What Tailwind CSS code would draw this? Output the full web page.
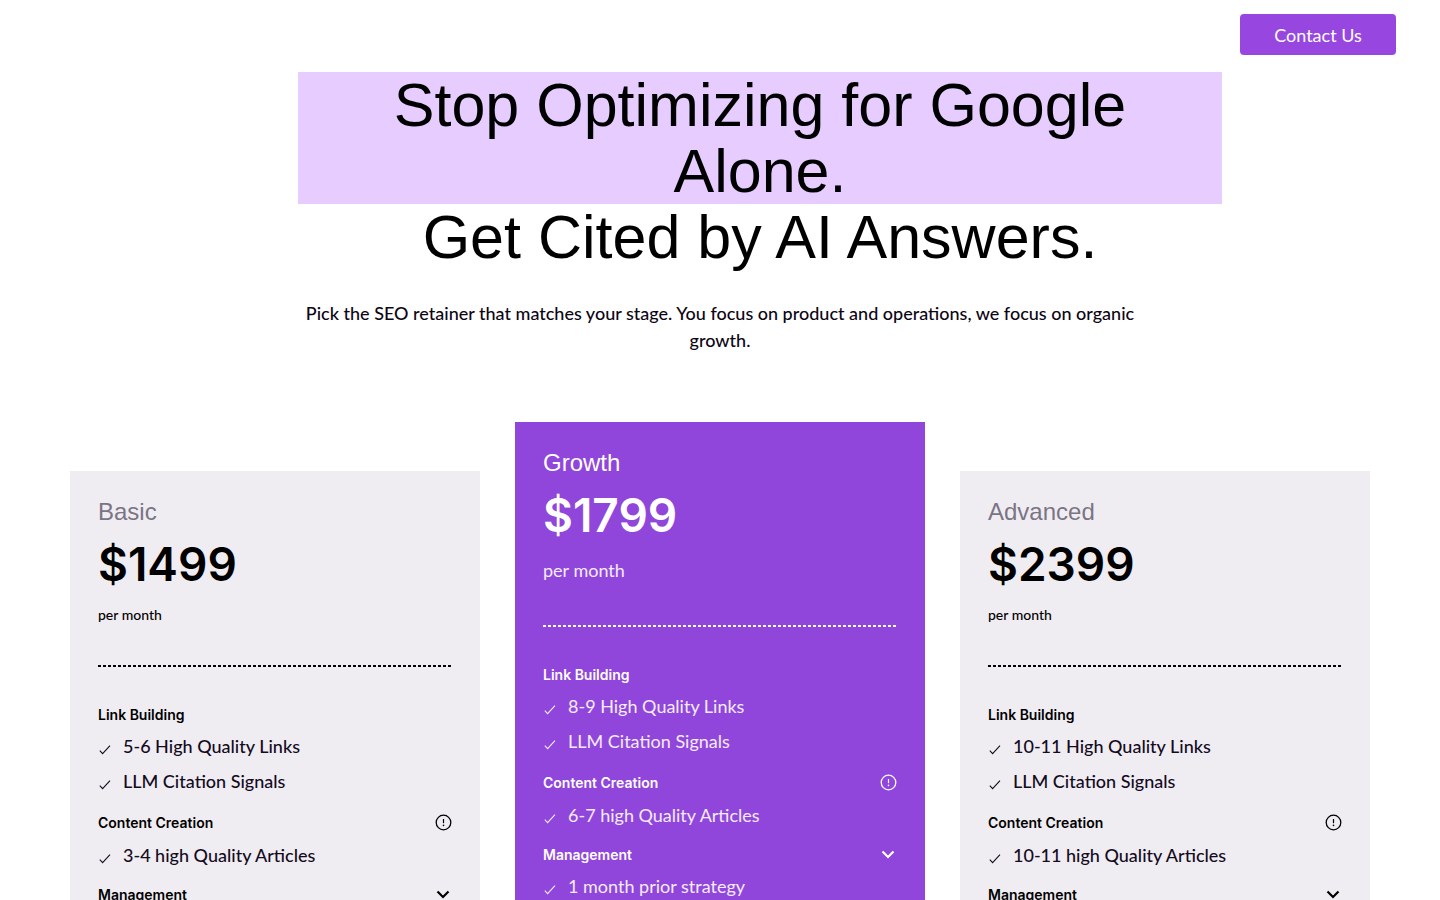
<!DOCTYPE html>
<html lang="en">
<head>
  <meta charset="UTF-8"/>
  <meta name="viewport" content="width=device-width, initial-scale=1.0"/>
  <title>SEO Pricing</title>
  <script src="https://cdn.jsdelivr.net/npm/@tailwindcss/browser@4"></script>
</head>
<body class="bg-white text-black font-['Lato',sans-serif]">

  <!-- Icons -->
  <svg class="hidden">
    <symbol id="check" viewBox="0 0 14 14">
      <path d="M1.8 8.6 L4.6 11.6 L12 3.6" fill="none" stroke="currentColor" stroke-width="1.1"/>
    </symbol>
    <symbol id="info" viewBox="0 0 18 18">
      <circle cx="9.5" cy="8.5" r="7.3" fill="none" stroke="currentColor" stroke-width="1.3"/>
      <path d="M9.5 5 V9.2" fill="none" stroke="currentColor" stroke-width="1.2"/>
      <circle cx="9.5" cy="11.4" r="0.8" fill="currentColor"/>
    </symbol>
    <symbol id="chevron" viewBox="0 0 18 18">
      <path d="M3.5 5.5 L9 11 L14.5 5.5" fill="none" stroke="currentColor" stroke-width="2.2"/>
    </symbol>
  </svg>

  <!-- Header -->
  <header class="flex justify-end h-[72px] pt-[14px] pr-11">
    <a href="#contact" class="flex items-center justify-center w-[156px] h-[41px] rounded bg-[#9747e0] text-white text-lg">Contact Us</a>
  </header>

  <main>
    <!-- Hero -->
    <section class="max-w-[844px] mx-auto text-center">
      <h1 class="-mr-20 text-[61px] leading-[66px] font-['Liberation_Sans',sans-serif]">
        <span class="block px-10 bg-[#e6ccff]">Stop Optimizing for Google Alone.</span>
        Get Cited by AI Answers.
      </h1>
      <p class="mt-[30px] text-lg leading-[27px] font-medium text-[#0d0614]">Pick the SEO retainer that matches your stage. You focus on product and operations, we focus on organic growth.</p>
    </section>

    <!-- Pricing Cards -->
    <section class="max-w-[1300px] mx-auto mt-[68px] grid grid-cols-3 gap-[35px] items-start">

      <!-- Basic -->
      <div class="mt-[49px] bg-[#f0edf2] p-7">
        <h2 class="text-2xl leading-[26px] text-[#7b7485] font-['Liberation_Sans',sans-serif]">Basic</h2>
        <p class="mt-3 text-[46px] leading-[54px] font-semibold font-['Inter',sans-serif]">$1499</p>
        <p class="mt-3.5 text-sm leading-5 font-medium">per month</p>
        <svg class="block w-full h-0.5 mt-10"><line x1="0" y1="1" x2="100%" y2="1" stroke="currentColor" stroke-width="2" stroke-dasharray="3 2"/></svg>

        <h3 class="mt-[38px] text-sm leading-5 font-semibold font-['Inter',sans-serif]">Link Building</h3>
        <ul class="mt-2 flex flex-col gap-2 text-lg leading-[27px] font-medium text-[#140b1e]">
          <li class="flex items-center gap-[11px]"><svg class="w-3.5 h-3.5 mt-1"><use href="#check"/></svg>5-6 High Quality Links</li>
          <li class="flex items-center gap-[11px]"><svg class="w-3.5 h-3.5 mt-1"><use href="#check"/></svg>LLM Citation Signals</li>
        </ul>

        <div class="mt-[18px] flex items-center justify-between">
          <h3 class="text-sm leading-5 font-semibold font-['Inter',sans-serif]">Content Creation</h3>
          <button type="button" aria-label="Content creation details"><svg class="block w-[18px] h-[18px]"><use href="#info"/></svg></button>
        </div>
        <ul class="mt-[9px] text-lg leading-[27px] font-medium text-[#140b1e]">
          <li class="flex items-center gap-[11px]"><svg class="w-3.5 h-3.5 mt-1"><use href="#check"/></svg>3-4 high Quality Articles</li>
        </ul>

        <div class="mt-4 flex items-center justify-between">
          <h3 class="text-sm leading-5 font-semibold font-['Inter',sans-serif]">Management</h3>
          <button type="button" aria-label="Toggle management"><svg class="block w-[18px] h-[18px]"><use href="#chevron"/></svg></button>
        </div>
      </div>

      <!-- Growth -->
      <div class="bg-[#9045db] text-white p-7">
        <h2 class="text-2xl leading-[26px] font-['Liberation_Sans',sans-serif]">Growth</h2>
        <p class="mt-3 text-[46px] leading-[54px] font-semibold font-['Inter',sans-serif]">$1799</p>
        <p class="mt-[15px] text-lg leading-[27px] text-white/90">per month</p>
        <svg class="block w-full h-0.5 mt-[41px]"><line x1="0" y1="1" x2="100%" y2="1" stroke="currentColor" stroke-width="2" stroke-dasharray="3 2"/></svg>

        <h3 class="mt-[38px] text-sm leading-5 font-semibold font-['Inter',sans-serif]">Link Building</h3>
        <ul class="mt-2 flex flex-col gap-2 text-lg leading-[27px] text-white/90">
          <li class="flex items-center gap-[11px]"><svg class="w-3.5 h-3.5 mt-1"><use href="#check"/></svg>8-9 High Quality Links</li>
          <li class="flex items-center gap-[11px]"><svg class="w-3.5 h-3.5 mt-1"><use href="#check"/></svg>LLM Citation Signals</li>
        </ul>

        <div class="mt-[18px] flex items-center justify-between">
          <h3 class="text-sm leading-5 font-semibold font-['Inter',sans-serif]">Content Creation</h3>
          <button type="button" aria-label="Content creation details"><svg class="block w-[18px] h-[18px]"><use href="#info"/></svg></button>
        </div>
        <ul class="mt-[9px] text-lg leading-[27px] text-white/90">
          <li class="flex items-center gap-[11px]"><svg class="w-3.5 h-3.5 mt-1"><use href="#check"/></svg>6-7 high Quality Articles</li>
        </ul>

        <div class="mt-4 flex items-center justify-between">
          <h3 class="text-sm leading-5 font-semibold font-['Inter',sans-serif]">Management</h3>
          <button type="button" aria-label="Toggle management"><svg class="block w-[18px] h-[18px]"><use href="#chevron"/></svg></button>
        </div>
        <ul class="mt-2 text-lg leading-[27px] text-white/90">
          <li class="flex items-center gap-[11px]"><svg class="w-3.5 h-3.5 mt-1"><use href="#check"/></svg>1 month prior strategy</li>
        </ul>
      </div>

      <!-- Advanced -->
      <div class="mt-[49px] bg-[#f0edf2] p-7">
        <h2 class="text-2xl leading-[26px] text-[#7b7485] font-['Liberation_Sans',sans-serif]">Advanced</h2>
        <p class="mt-3 text-[46px] leading-[54px] font-semibold font-['Inter',sans-serif]">$2399</p>
        <p class="mt-3.5 text-sm leading-5 font-medium">per month</p>
        <svg class="block w-full h-0.5 mt-10"><line x1="0" y1="1" x2="100%" y2="1" stroke="currentColor" stroke-width="2" stroke-dasharray="3 2"/></svg>

        <h3 class="mt-[38px] text-sm leading-5 font-semibold font-['Inter',sans-serif]">Link Building</h3>
        <ul class="mt-2 flex flex-col gap-2 text-lg leading-[27px] font-medium text-[#140b1e]">
          <li class="flex items-center gap-[11px]"><svg class="w-3.5 h-3.5 mt-1"><use href="#check"/></svg>10-11 High Quality Links</li>
          <li class="flex items-center gap-[11px]"><svg class="w-3.5 h-3.5 mt-1"><use href="#check"/></svg>LLM Citation Signals</li>
        </ul>

        <div class="mt-[18px] flex items-center justify-between">
          <h3 class="text-sm leading-5 font-semibold font-['Inter',sans-serif]">Content Creation</h3>
          <button type="button" aria-label="Content creation details"><svg class="block w-[18px] h-[18px]"><use href="#info"/></svg></button>
        </div>
        <ul class="mt-[9px] text-lg leading-[27px] font-medium text-[#140b1e]">
          <li class="flex items-center gap-[11px]"><svg class="w-3.5 h-3.5 mt-1"><use href="#check"/></svg>10-11 high Quality Articles</li>
        </ul>

        <div class="mt-4 flex items-center justify-between">
          <h3 class="text-sm leading-5 font-semibold font-['Inter',sans-serif]">Management</h3>
          <button type="button" aria-label="Toggle management"><svg class="block w-[18px] h-[18px]"><use href="#chevron"/></svg></button>
        </div>
      </div>

    </section>
  </main>
</body>
</html>
